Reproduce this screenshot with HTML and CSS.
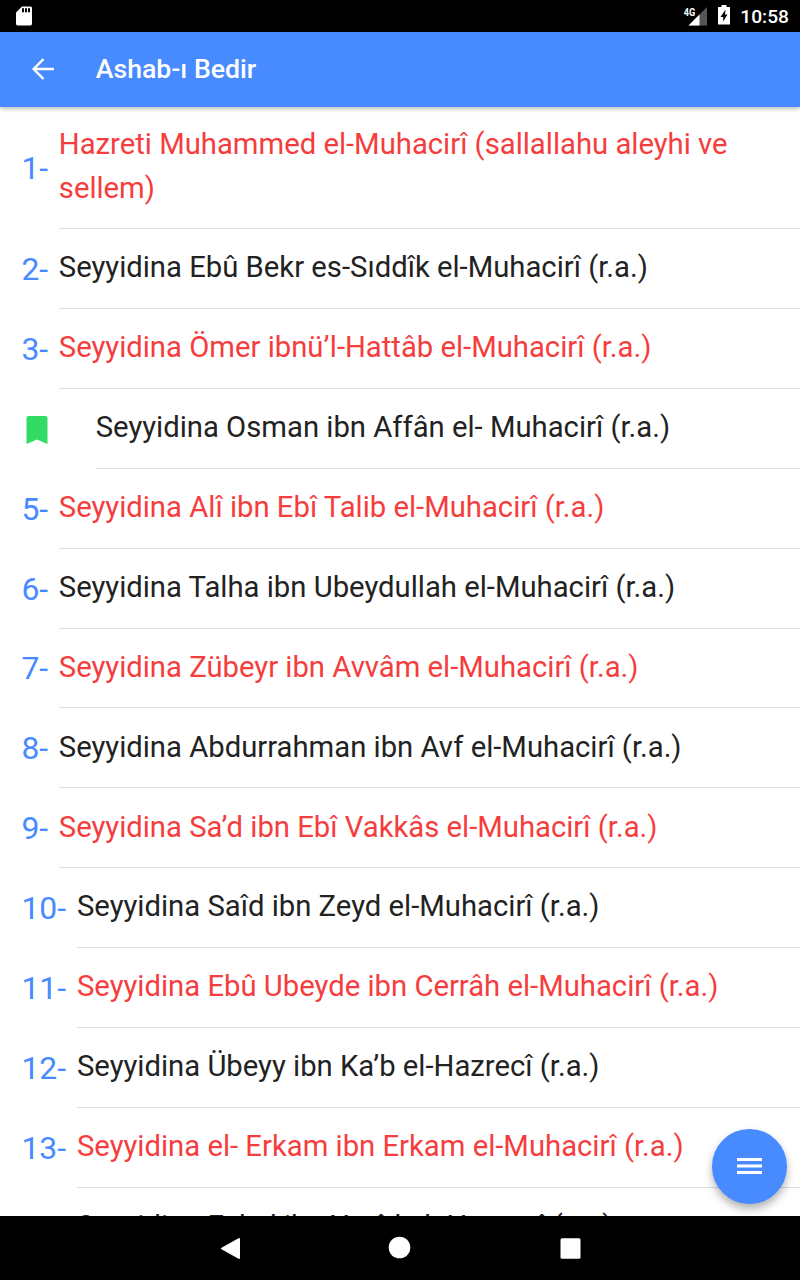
FILE: index.html
```html
<!DOCTYPE html>
<html lang="tr">
<head>
<meta charset="utf-8">
<title>Ashab-ı Bedir</title>
<link rel="stylesheet" href="styles.css">
</head>
<body>
<div class="screen">
  <div class="status">
    <svg class="sd" width="16" height="20" viewBox="0 0 16 20"><path fill="#fff" fill-rule="evenodd" d="M6 .5h8.500Q16 .5 16 2v15.500Q16 19.500 14.500 19.500h-13Q0 19.500 0 17.500V6.500zM6 2.200v4h2v-4zm3 0v4h2v-4zm3 0v4h2v-4z"/></svg>
    <span class="space"></span>
    <svg class="signal" width="24" height="20" viewBox="0 0 24 20"><path fill="#555" d="M24 1v18.500H5.500z"/><path fill="#fff" d="M16.500 8.500v11h-11z"/><text class="net" x=".8" y="9.500" textLength="11.500" lengthAdjust="spacingAndGlyphs">4G</text></svg>
    <svg class="battery" width="12" height="20" viewBox="0 0 12 20"><path fill="#fff" fill-rule="evenodd" d="M3.500 0h5v2H12v17.500H0V2h3.500zM7.500 4.500L2.500 12h2.700v4.500L9.500 9.500H7z"/></svg>
    <span class="clock">10:58</span>
  </div>
  <header class="bar">
    <svg class="back" width="22" height="22" viewBox="0 0 22 22"><path fill="none" stroke="#fff" stroke-width="2.500" d="M11.500 1L1.700 11l9.800 10M1.700 11H22"/></svg>
    <h1 class="title">Ashab-ı Bedir</h1>
  </header>
  <main class="list">
    <div class="item first red"><span class="num">1-</span><span class="name">Hazreti Muhammed el-Muhacirî (sallallahu aleyhi ve sellem)</span></div>
    <div class="item"><span class="num">2-</span><span class="name">Seyyidina Ebû Bekr es-Sıddîk el-Muhacirî (r.a.)</span></div>
    <div class="item red"><span class="num">3-</span><span class="name">Seyyidina Ömer ibnü’l-Hattâb el-Muhacirî (r.a.)</span></div>
    <div class="item marked"><span class="num"><svg class="mark" width="22" height="28" viewBox="0 0 22 28"><path fill="#32db64" d="M2.500 0h17q2 0 2 2v26l-10.500-4.500L.5 28V2q0-2 2-2z"/></svg></span><span class="name">Seyyidina Osman ibn Affân el- Muhacirî (r.a.)</span></div>
    <div class="item red"><span class="num">5-</span><span class="name">Seyyidina Alî ibn Ebî Talib el-Muhacirî (r.a.)</span></div>
    <div class="item"><span class="num">6-</span><span class="name">Seyyidina Talha ibn Ubeydullah el-Muhacirî (r.a.)</span></div>
    <div class="item red"><span class="num">7-</span><span class="name">Seyyidina Zübeyr ibn Avvâm el-Muhacirî (r.a.)</span></div>
    <div class="item"><span class="num">8-</span><span class="name">Seyyidina Abdurrahman ibn Avf el-Muhacirî (r.a.)</span></div>
    <div class="item red"><span class="num">9-</span><span class="name">Seyyidina Sa’d ibn Ebî Vakkâs el-Muhacirî (r.a.)</span></div>
    <div class="item wide"><span class="num">10-</span><span class="name">Seyyidina Saîd ibn Zeyd el-Muhacirî (r.a.)</span></div>
    <div class="item wide red"><span class="num">11-</span><span class="name">Seyyidina Ebû Ubeyde ibn Cerrâh el-Muhacirî (r.a.)</span></div>
    <div class="item wide"><span class="num">12-</span><span class="name">Seyyidina Übeyy ibn Ka’b el-Hazrecî (r.a.)</span></div>
    <div class="item wide red"><span class="num">13-</span><span class="name">Seyyidina el- Erkam ibn Erkam el-Muhacirî (r.a.)</span></div>
    <div class="item wide"><span class="num">14-</span><span class="name">Seyyidina Es’ad ibn Yezîd el- Hazrecî (r.a.)</span></div>
  </main>
  <nav class="nav">
    <svg width="800" height="64" viewBox="0 0 800 64"><path fill="#fff" stroke="#fff" stroke-width="2" stroke-linejoin="round" d="M222 32.500l17-9.500v19z"/><circle cx="399.500" cy="31.500" r="10.800" fill="#fff"/><rect x="560.500" y="22.300" width="20" height="20.500" rx="1.500" fill="#fff"/></svg>
  </nav>
  <button class="fab" aria-label="Menü"><svg width="26" height="18" viewBox="0 0 26 18"><path fill="#fff" d="M1 1h25v3H1zm0 6.500h25v3H1zm0 6.500h25v3H1z"/></svg></button>
</div>
</body>
</html>
```
FILE: styles.css
```css
* { box-sizing: border-box; }
body { margin: 0; font-family: Roboto, sans-serif; }
.screen { position: relative; display: flex; flex-direction: column; width: 800px; height: 1280px; overflow: hidden; background: #fff; }
.status { display: flex; align-items: center; flex: none; height: 32px; padding: 0 11px 0 16px; background: #000; color: #fff; }
.space { flex: 1; }
.net { font: 700 10px Roboto, sans-serif; fill: #fff; }
.battery { margin: 0 10px 2px 11px; }
.clock { font-size: 19.2px; font-weight: 500; }
.bar { position: relative; z-index: 1; display: flex; align-items: center; flex: none; height: 75px; padding: 0 0 2px 32px; background: #488aff; color: #fff; box-shadow: 0 1px 5px rgba(0,0,0,.35); }
.title { margin: 0 0 0 41.800px; font-size: 26.65px; font-weight: 500; }
.list { flex: 1; min-height: 0; overflow: hidden; }
.item { display: flex; align-items: center; height: 79.92px; padding-left: 21.4px; color: #222; }
.first { height: 122px; }
.num { flex: none; width: 37.4px; font-size: 31.9px; color: #488aff; }
.wide .num { width: 55.6px; }
.marked .num { display: flex; width: 74.3px; padding: 3px 0 0 4.6px; }
.name { display: flex; align-items: center; flex: 1; height: 100%; padding: 0 32px .62px 0; border-bottom: 1px solid #dedede; font-size: 29.26px; line-height: 43.9px; }
.red .name { color: #f53d3d; }
.nav { flex: none; height: 64px; background: #000; }
.nav svg { display: block; }
.fab { position: absolute; left: 712px; top: 1129px; display: flex; align-items: center; justify-content: center; width: 74.5px; height: 74.5px; padding: 0 0 1px; border: 0; border-radius: 50%; background: #488aff; box-shadow: 0 5px 8px rgba(0,0,0,.3); }
```
